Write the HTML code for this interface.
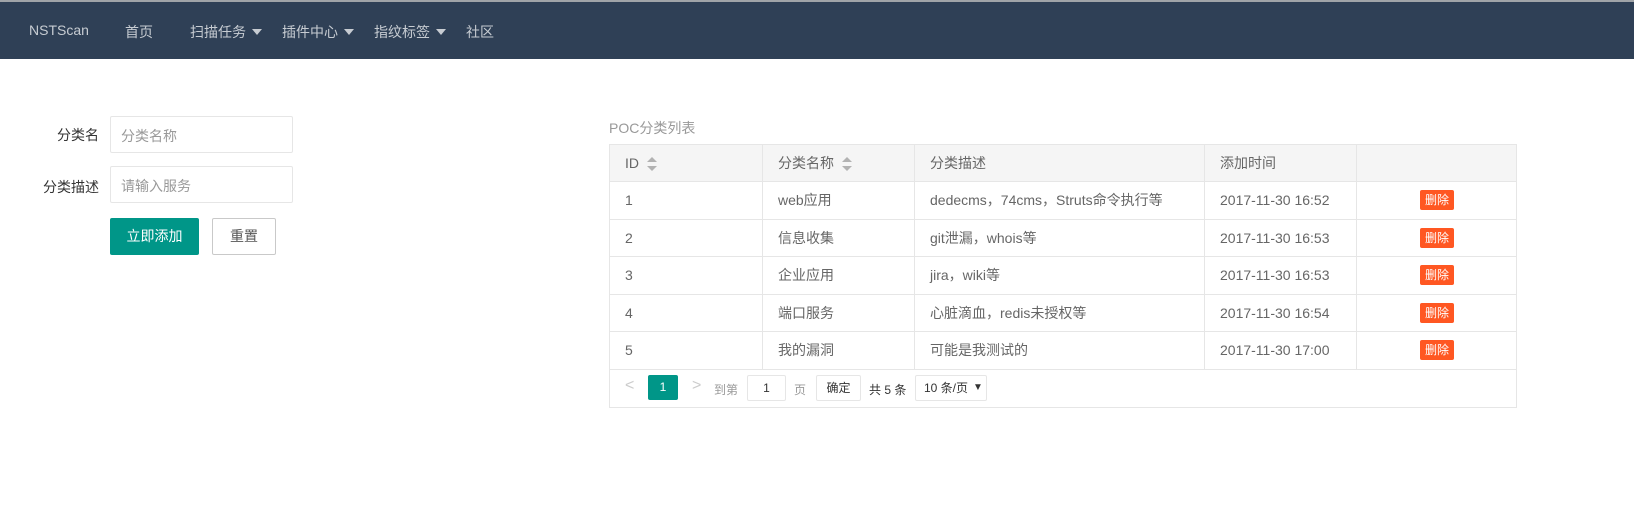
<!DOCTYPE html>
<html><head><meta charset="utf-8"><style>
*{margin:0;padding:0;box-sizing:border-box}
body{width:1634px;height:514px;background:#fff;font-family:"Liberation Sans","Noto Sans CJK SC",sans-serif;font-size:14px;color:#666;position:relative;overflow:hidden}
.nav{position:absolute;left:0;top:0;width:1634px;height:59px;background:#2f4056;border-top:2px solid #a0a4a8}
.nav span{position:absolute;top:20px;color:#c7ccd2;font-size:14px}
.tri{display:inline-block;width:0;height:0;border-left:5px solid transparent;border-right:5px solid transparent;border-top:6px solid #c7ccd2;margin-left:6px;vertical-align:2px}
.lbl{position:absolute;color:#333;font-size:14px}
.inp{position:absolute;left:110px;width:183px;height:37px;border:1px solid #e6e6e6;border-radius:2px;color:#999;padding:9px 10px;font-size:14px}
.btn{position:absolute;top:218px;height:37px;font-size:14px;text-align:center;line-height:37px;border-radius:2px}
.cap{position:absolute;left:609px;top:118px;color:#999;font-size:14px}
table{position:absolute;left:609px;top:144px;border-collapse:collapse;width:908px}
td{border:1px solid #e6e6e6;height:37.5px;padding:0 15px;font-size:14px;color:#666;white-space:nowrap}
tr.h td{background:#f5f5f5;height:37px}
.sort{display:inline-block;vertical-align:-3px;margin-left:8px;width:10px;height:14px;position:relative}
.sort:before{content:"";position:absolute;top:0;left:0;border-left:5px solid transparent;border-right:5px solid transparent;border-bottom:5px solid #b2b2b2}
.sort:after{content:"";position:absolute;bottom:0;left:0;border-left:5px solid transparent;border-right:5px solid transparent;border-top:5px solid #b2b2b2}
.del{display:inline-block;background:#ff5722;color:#fff;font-size:12px;height:20px;line-height:20px;padding:0 5px;border-radius:2px;margin-left:48px}
.pg{position:absolute;left:609px;top:368px;width:908px;height:40px;border:1px solid #e6e6e6;border-top:none;font-size:12px}
.pg *{position:absolute}
</style></head><body>
<div class="nav">
<span style="left:29px">NSTScan</span>
<span style="left:125px">首页</span>
<span style="left:190px">扫描任务<i class="tri"></i></span>
<span style="left:282px">插件中心<i class="tri"></i></span>
<span style="left:374px">指纹标签<i class="tri"></i></span>
<span style="left:466px">社区</span>
</div>
<div class="lbl" style="left:57px;top:125px">分类名</div>
<div class="inp" style="top:116px">分类名称</div>
<div class="lbl" style="left:43px;top:177px">分类描述</div>
<div class="inp" style="top:166px">请输入服务</div>
<div class="btn" style="left:110px;width:89px;background:#009688;color:#fff">立即添加</div>
<div class="btn" style="left:212px;width:64px;border:1px solid #c9c9c9;color:#555;line-height:35px">重置</div>
<div class="cap">POC分类列表</div>
<table>
<tr class="h"><td style="width:153px">ID<i class="sort"></i></td><td style="width:152px">分类名称<i class="sort"></i></td><td style="width:290px">分类描述</td><td style="width:152px">添加时间</td><td></td></tr>
<tr><td>1</td><td>web应用</td><td>dedecms，74cms，Struts命令执行等</td><td>2017-11-30 16:52</td><td><span class="del">删除</span></td></tr>
<tr><td>2</td><td>信息收集</td><td>git泄漏，whois等</td><td>2017-11-30 16:53</td><td><span class="del">删除</span></td></tr>
<tr><td>3</td><td>企业应用</td><td>jira，wiki等</td><td>2017-11-30 16:53</td><td><span class="del">删除</span></td></tr>
<tr><td>4</td><td>端口服务</td><td>心脏滴血，redis未授权等</td><td>2017-11-30 16:54</td><td><span class="del">删除</span></td></tr>
<tr><td>5</td><td>我的漏洞</td><td>可能是我测试的</td><td>2017-11-30 17:00</td><td><span class="del">删除</span></td></tr>
</table>
<div class="pg">
<div style="left:15px;top:9px;color:#ccc;font-size:16px">&lt;</div>
<div style="left:38px;top:7px;width:30px;height:25px;background:#009688;color:#fff;border-radius:2px;text-align:center;line-height:25px">1</div>
<div style="left:82px;top:9px;color:#ccc;font-size:16px">&gt;</div>
<div style="left:104px;top:13px;color:#999">到第</div>
<div style="left:137px;top:7px;width:39px;height:26px;border:1px solid #e6e6e6;text-align:center;line-height:24px;color:#333;border-radius:2px">1</div>
<div style="left:184px;top:13px;color:#999">页</div>
<div style="left:206px;top:7px;width:45px;height:26px;border:1px solid #e6e6e6;text-align:center;line-height:24px;color:#333;border-radius:2px">确定</div>
<div style="left:259px;top:13px;color:#333">共 5 条</div>
<div style="left:305px;top:7px;width:72px;height:26px;border:1px solid #e6e6e6;line-height:24px;color:#333;padding-left:8px;border-radius:2px">10 条/页<span style="left:57px;top:0;font-size:10px">▼</span></div>
</div>
</body></html>
